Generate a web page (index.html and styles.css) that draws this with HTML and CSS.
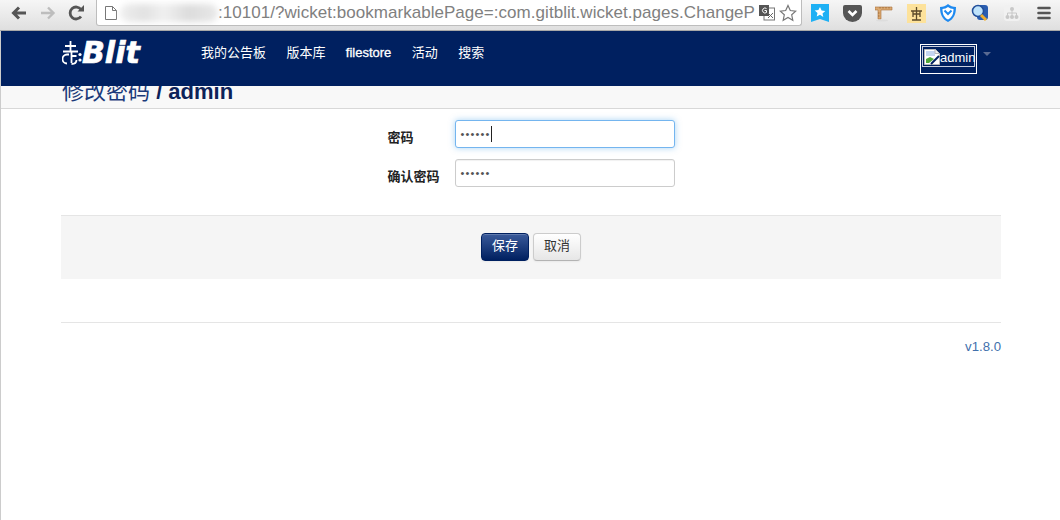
FILE: index.html
```html
<!DOCTYPE html>
<html lang="zh">
<head>
<meta charset="utf-8">
<title>修改密码</title>
<link rel="stylesheet" href="styles.css">
</head>
<body>
<header class="chrome">
  <div class="tb-btn"><svg width="18" height="16" viewBox="0 0 18 16"><path d="M16 8H4M9 2.500 3.500 8 9 13.500" fill="none" stroke="#555" stroke-width="3"/></svg></div>
  <div class="tb-btn"><svg width="18" height="16" viewBox="0 0 18 16"><path d="M2 8h12M9 2.500 14.500 8 9 13.500" fill="none" stroke="#bdbdbd" stroke-width="2.400"/></svg></div>
  <div class="tb-btn"><svg width="17" height="16" viewBox="0 0 17 16"><path d="M13 11.500A6 6 0 1 1 13 4.500" fill="none" stroke="#555" stroke-width="2.800"/><path d="M9.500 6.500h6.500V0z" fill="#555"/></svg></div>
  <div class="omnibox">
    <svg class="page-ic" width="12" height="14" viewBox="0 0 12 14"><path d="M.5.500h7l4 4v9H.5zM7.500.500v4h4" fill="#fff" stroke="#777"/></svg>
    <span class="blur"></span>
    <span class="url">:10101/?wicket:bookmarkablePage=:com.gitblit.wicket.pages.ChangeP</span>
    <svg class="tr-ic" width="16" height="16" viewBox="0 0 16 16"><rect x="5" y="3" width="10.500" height="12" fill="#fff" stroke="#777"/><rect width="10" height="11" fill="#555"/><path d="M7.500 3.500A2.500 2.500 0 1 0 7.500 7.500V5.500H5.500" fill="none" stroke="#fff"/><path d="M9 8l5 5M14 8l-5 5" stroke="#666"/></svg>
    <svg class="star-ic" width="18" height="18" viewBox="0 0 18 18"><path d="M9 1.500l2.300 5 5.400.6-4 3.700 1.100 5.400L9 13.400l-4.800 2.800 1.100-5.400-4-3.700 5.400-.6z" fill="#fff" stroke="#777" stroke-width="1.200"/></svg>
  </div>
  <div class="exts">
    <div class="ext"><svg width="18" height="18" viewBox="0 0 18 18"><path d="M0 0h18v18l-9-3-9 3z" fill="#1eb0f4"/><path d="M9 3l1.600 3.500 3.700.4-2.800 2.500.8 3.700L9 10.700l-3.300 1.900.8-3.700-2.800-2.500 3.700-.4z" fill="#fff"/></svg></div>
    <div class="ext"><svg width="19" height="17" viewBox="0 0 19 17"><path d="M0 2a2 2 0 0 1 2-2h15a2 2 0 0 1 2 2v6a9.500 9 0 0 1-19 0z" fill="#555"/><path d="M5.500 6l4 4 4-4" fill="none" stroke="#fff" stroke-width="2.600"/></svg></div>
    <div class="ext"><svg width="18" height="18" viewBox="0 0 18 18"><path d="M0 3h17v3H6v9H3V6H0z" fill="#dcaa72" stroke="#a86f3a" stroke-width=".6"/><path d="M5 3v1.500M8 3v1.500M11 3v1.500M14 3v1.500M3 9h1.500M3 12h1.500" stroke="#8a5a2a" stroke-width=".7"/><ellipse cx="7" cy="16.500" rx="6" ry="1" fill="#ddd"/></svg></div>
    <div class="ext"><svg width="19" height="19" viewBox="0 0 19 19"><rect width="19" height="19" fill="#fde29b"/><path d="M9.500 3v13M4 7h11M6 10h7M5 16h9M6 7v6M13 7v6" stroke="#5b4a2a" stroke-width="1.300" fill="none"/></svg></div>
    <div class="ext"><svg width="18" height="18" viewBox="0 0 18 18"><path d="M1 3c3 0 6-1 8-3 2 2 5 3 8 3 0 7-2 12-8 15C3 15 1 10 1 3z" fill="#1f8af0"/><path d="M3.500 5c2 0 4-.7 5.500-2 1.500 1.300 3.500 2 5.500 2 0 5-1.500 8.500-5.500 10.500C5 13.500 3.500 10 3.500 5z" fill="#fff"/><path d="M5.500 6.500 9 10l3.500-3.500" fill="none" stroke="#1f8af0" stroke-width="2"/></svg></div>
    <div class="ext"><svg width="18" height="18" viewBox="0 0 18 18"><rect x="6" y="1" width="11" height="15" rx="3" fill="#2a5db0"/><circle cx="7" cy="7" r="5.500" fill="#bfe3fb" stroke="#234f9a" stroke-width="1.500"/><path d="M10 11l5 5" stroke="#f0b030" stroke-width="3"/></svg></div>
    <div class="ext"><svg width="16" height="16" viewBox="0 0 16 16"><rect width="16" height="16" rx="3" fill="#f1f1f1"/><path d="M8 5v3M3.500 11V8h9v3M8 8v3" fill="none" stroke="#c8c8c8"/><circle cx="8" cy="4" r="2" fill="#c8c8c8"/><circle cx="3.500" cy="12" r="2" fill="#c8c8c8"/><circle cx="8" cy="12" r="2" fill="#c8c8c8"/><circle cx="12.500" cy="12" r="2" fill="#c8c8c8"/></svg></div>
    <div class="ext"><svg width="14" height="14" viewBox="0 0 14 14"><path d="M1.500 2h11M1.500 7h11M1.500 12h11" stroke="#555" stroke-width="2.600" stroke-linecap="round"/></svg></div>
  </div>
</header>

<div class="page">
  <nav class="navbar">
    <div class="container nav-inner">
      <a class="brand">
        <svg class="brand-mark" width="20" height="25" viewBox="0 0 20 25"><g fill="none" stroke="#fff" stroke-width="1.800"><path d="M8.500 0v11M3 5h11M1 10.500h15M9.500 11v11M5 22.500a4.500 4.500 0 1 1 0-9h2M9.500 15h5M9.500 23c3.500 0 5-1 5-4"/></g><circle cx="18" cy="13.500" r="1.600" fill="#fff"/><circle cx="18" cy="19" r="1.600" fill="#fff"/></svg>
        <span class="brand-text">Blit</span>
      </a>
      <ul class="menu">
        <li>我的公告板</li>
        <li>版本库</li>
        <li class="latin">filestore</li>
        <li>活动</li>
        <li>搜索</li>
      </ul>
      <div class="user">
        <div class="avatar-box">
          <div class="avatar">
            <svg width="16" height="16" viewBox="0 0 16 16"><path d="M.5.500h11l4 4v11H.5z" fill="#fff" stroke="#b8b8b8"/><path d="M2 2h9v5H2z" fill="#c4d4f0"/><path d="M2 14V10l4-2 4 2-5 4z" fill="#4fa63a"/><path d="M11 .500v4h4" fill="#eee" stroke="#b8b8b8"/><path d="M7 15l8-8" stroke="#002060" stroke-width="2"/></svg>
            <span class="alt">admin</span>
          </div>
        </div>
        <span class="caret"></span>
      </div>
    </div>
  </nav>

  <div class="subheader">
    <h2 class="container title">修改密码 <strong>/ admin</strong></h2>
  </div>

  <main class="container">
    <div class="form">
      <label class="lbl">密码</label>
      <div class="field focus">••••••<span class="cursor"></span></div>
      <label class="lbl">确认密码</label>
      <div class="field">••••••</div>
    </div>
    <div class="actions">
      <button class="btn primary">保存</button>
      <button class="btn">取消</button>
    </div>
    <footer class="foot"><a class="ver">v1.8.0</a></footer>
  </main>
</div>
</body>
</html>
```
FILE: styles.css
```css
* { box-sizing: border-box; }
html, body { margin: 0; height: 100%; }
body {
  background: #fff;
  font-family: "Liberation Sans", "Noto Sans CJK SC", sans-serif;
  font-size: 13px;
  color: #333;
  overflow: hidden;
}

.chrome {
  display: flex;
  height: 31px;
  padding-left: 4px;
  background: linear-gradient(#f6f6f6, #dfdfdf);
  border-bottom: 1px solid #a8a8a8;
}
.tb-btn {
  width: 29px;
  height: 26px;
  display: flex;
  align-items: center;
  justify-content: center;
}
.omnibox {
  width: 706px;
  height: 26px;
  margin-left: 5px;
  display: flex;
  align-items: center;
  padding-left: 8px;
  background: #fff;
  border: 1px solid #bdbdbd;
  border-top: 0;
  border-radius: 0 0 3px 3px;
  overflow: hidden;
}
.page-ic { flex: none; }
.blur {
  flex: none;
  width: 98px;
  height: 18px;
  margin-left: 3px;
  background: linear-gradient(90deg, #eee, #e2e2e2 25%, #f0f0f0 45%, #dcdcdc 70%, #e8e8e8);
  border-radius: 9px;
  filter: blur(3px);
}
.url {
  flex: none;
  width: 540px;
  font-size: 17px;
  letter-spacing: .04px;
  color: #808080;
  white-space: nowrap;
  overflow: hidden;
}
.tr-ic { flex: none; margin-left: 1px; }
.star-ic { flex: none; margin-left: 4px; }
.exts { display: flex; margin-left: 2px; }
.ext {
  width: 32px;
  height: 26px;
  display: flex;
  align-items: center;
  justify-content: center;
}

.page {
  height: 489px;
  border-left: 1px solid #ccc;
}
.container {
  width: 940px;
  margin-left: 60px;
}
.navbar {
  height: 55px;
  background: #002060;
}
.nav-inner {
  display: flex;
  align-items: flex-start;
  height: 100%;
}
.brand {
  display: flex;
  align-items: flex-start;
  width: 140px;
  height: 45px;
  padding-left: 1px;
}
.brand-mark { flex: none; margin-top: 10px; }
.brand-text {
  margin-top: 4px;
  font-family: "DejaVu Sans", sans-serif;
  font-weight: 700;
  font-style: italic;
  font-size: 30px;
  line-height: 36px;
  color: #fff;
  -webkit-text-stroke: .7px #fff;
}
.menu {
  display: flex;
  gap: 20.400px;
  margin: 0;
  padding: 13px 0 0;
  list-style: none;
  color: #fff;
  font-size: 13px;
  line-height: 17px;
}
.latin { -webkit-text-stroke: .3px #fff; }
.user {
  display: flex;
  margin-left: auto;
  width: 81px;
  padding-top: 13px;
}
.avatar-box {
  width: 57px;
  height: 30px;
  padding: 1px;
  border: 1px solid #fff;
}
.avatar {
  display: flex;
  align-items: center;
  height: 21px;
  padding-left: 1px;
  border: 1px solid #c8cede;
  color: #fff;
  font-size: 13px;
}
.avatar svg { flex: none; }
.alt { margin-top: 1px; }
.caret {
  width: 0;
  height: 0;
  margin: 8px 0 0 6px;
  border-left: 4px solid transparent;
  border-right: 4px solid transparent;
  border-top: 4px solid #5a6a92;
}

.subheader {
  height: 23px;
  overflow: hidden;
  background: #f8f8f8;
  border-bottom: 1px solid #d8d8d8;
  display: flex;
  align-items: flex-end;
}
.title {
  margin-top: 0;
  margin-bottom: 1px;
  padding-left: 1px;
  font-size: 22px;
  font-weight: 400;
  line-height: 30px;
  color: #1b3a7a;
  white-space: nowrap;
}
.title strong { color: #0d2258; font-weight: 700; }

.form {
  display: grid;
  grid-template-columns: 67px 220px;
  row-gap: 11px;
  justify-content: center;
  margin-top: 11px;
}
.lbl {
  padding-top: 8.500px;
  font-size: 13px;
  font-weight: 700;
  line-height: 17px;
  color: #222;
}
.field {
  height: 28px;
  padding: 0 5px;
  display: flex;
  align-items: center;
  background: #fff;
  border: 1px solid #ccc;
  border-radius: 3px;
  font-size: 11px;
  letter-spacing: 1.150px;
  color: #555;
  box-shadow: inset 0 1px 1px rgba(0, 0, 0, .06);
}
.field.focus {
  border-color: #74b5ef;
  box-shadow: 0 0 6px rgba(82, 168, 236, .5);
}
.cursor {
  width: 1px;
  height: 16px;
  background: #222;
}

.actions {
  display: flex;
  justify-content: center;
  gap: 4px;
  height: 64px;
  margin-top: 28px;
  padding-top: 17px;
  background: #f5f5f5;
  border-top: 1px solid #e5e5e5;
}
.btn {
  width: 48px;
  height: 28px;
  padding: 0 0 2px;
  font: 13px/18px "Liberation Sans", "Noto Sans CJK SC", sans-serif;
  color: #333;
  background: linear-gradient(#fff, #e6e6e6);
  border: 1px solid #ccc;
  border-bottom-color: #b3b3b3;
  border-radius: 4px;
  box-shadow: inset 0 1px 0 rgba(255, 255, 255, .2), 0 1px 2px rgba(0, 0, 0, .05);
}
.btn.primary {
  color: #fff;
  background: linear-gradient(#3a5a9a, #002060);
  border-color: #002060;
}
.foot {
  margin-top: 43px;
  padding-top: 16px;
  border-top: 1px solid #e5e5e5;
  text-align: right;
}
.ver {
  font-size: 13.200px;
  line-height: 16px;
  color: #4270ac;
}
```
